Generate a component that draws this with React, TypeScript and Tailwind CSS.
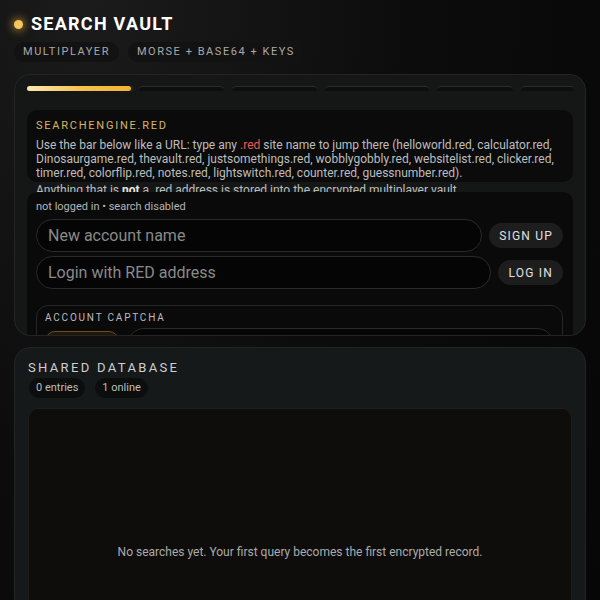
import React from "react";

const tabs = [
  { w: 104, active: true },
  { w: 85 },
  { w: 85 },
  { w: 104 },
  { w: 76 },
  { w: 60 },
];

export default function App() {
  return (
    <div
      className="min-h-screen w-full overflow-hidden bg-[#060606] bg-[radial-gradient(ellipse_at_15%_0%,#1b1b1b_0%,#0c0c0c_45%,#050505_100%)] px-[14px] pt-[14px] pb-[20px]"
      style={{ fontFamily: "Roboto, 'Liberation Sans', sans-serif" }}
    >
      {/* Header */}
      <div className="flex h-[20px] items-center gap-[8px]">
        <span className="block h-[9px] w-[9px] rounded-full bg-[#f7c65e] shadow-[0_0_8px_2px_rgba(245,185,66,0.55)]" />
        <h1 className="text-[18px] font-bold tracking-[0.07em] text-white leading-none">
          SEARCH VAULT
        </h1>
      </div>
      <div className="mt-[8px] flex gap-[9px]">
        <span className="flex h-[20px] items-center rounded-full bg-[#121212] px-[9px] text-[11px] tracking-[0.14em] text-[#a9a9a9]">
          MULTIPLAYER
        </span>
        <span className="flex h-[20px] items-center rounded-full bg-[#121212] px-[9px] text-[11px] tracking-[0.14em] text-[#a9a9a9]">
          MORSE + BASE64 + KEYS
        </span>
      </div>

      {/* Main card */}
      <div className="mt-[12px] h-[262px] overflow-hidden rounded-[16px] border border-[#232525] bg-[#151717] px-[12px] pt-[11px]">
        <div className="flex gap-[8px] overflow-hidden">
          {tabs.map((t, i) => (
            <div
              key={i}
              style={{ width: t.w }}
              className={
                t.active
                  ? "h-[5px] shrink-0 rounded-full bg-gradient-to-r from-[#fbe7b0] via-[#f5c350] to-[#f0b232] shadow-[0_0_6px_rgba(240,180,60,0.35)]"
                  : "h-[5px] shrink-0 rounded-t-[4px] border-t border-[#2a2c2c] bg-[#0d0e0e]"
              }
            />
          ))}
        </div>

        {/* Info box */}
        <div className="mt-[19px] h-[72px] rounded-[10px] bg-[#0b0b0b] px-[9px] pt-[9px]">
          <div className="text-[11px] leading-[14px] tracking-[0.16em] text-[#d8b463]">
            SEARCHENGINE.RED
          </div>
          <p className="mt-[5px] text-[12px] leading-[14px] text-[#bdbdbd]">
            Use the bar below like a URL: type any{" "}
            <span className="text-[#ee5a52]">.red</span> site name to jump there
            (helloworld.red, calculator.red, Dinosaurgame.red, thevault.red,
            justsomethings.red, wobblygobbly.red, websitelist.red, clicker.red,
            timer.red, colorflip.red, notes.red, lightswitch.red, counter.red,
            guessnumber.red).
          </p>
          <p className="mt-[3px] text-[12px] leading-[14px] text-[#bdbdbd]">
            Anything that is <b className="font-bold text-[#e5e5e5]">not</b> a .red
            address is stored into the encrypted multiplayer vault.
          </p>
        </div>

        {/* Login card */}
        <div className="relative mt-[10px] rounded-[10px] bg-[#0a0a0a] pl-[9px] pr-[10px] pt-[8px] pb-[20px]">
          <div className="text-[11px] leading-[14px] text-[#b5b5b5]">
            not logged in • search disabled
          </div>
          <div className="mt-[5px] flex items-center gap-[7px]">
            <div className="flex h-[33px] flex-1 items-center rounded-full border border-[#2b2b2b] bg-[#050505] px-[11px] text-[16px] text-[#8a8a8a]">
              New account name
            </div>
            <button className="h-[25px] rounded-full bg-[#1d1d1d] px-[10px] text-[12px] tracking-[0.1em] text-[#e0e0e0]">
              SIGN UP
            </button>
          </div>
          <div className="mt-[4px] flex items-center gap-[7px]">
            <div className="flex h-[33px] flex-1 items-center rounded-full border border-[#2b2b2b] bg-[#050505] px-[11px] text-[16px] text-[#8a8a8a]">
              Login with RED address
            </div>
            <button className="h-[25px] rounded-full bg-[#1d1d1d] px-[10px] text-[12px] tracking-[0.1em] text-[#e0e0e0]">
              LOG IN
            </button>
          </div>

          <div className="mt-[16px] rounded-[12px] border border-[#262626] px-[8px] pt-[5px] pb-[20px]">
            <div className="text-[10px] leading-[14px] tracking-[0.18em] text-[#bcbcbc]">
              ACCOUNT CAPTCHA
            </div>
            <div className="mt-[3px] flex items-start gap-[8px]">
              <div className="mt-[3px] h-[30px] w-[74px] rounded-[10px] border border-[#6a5020] bg-[#1e170b]" />
              <div className="h-[34px] flex-1 rounded-full border border-[#2b2b2b] bg-[#060606]" />
            </div>
          </div>
        </div>
      </div>

      {/* Shared database */}
      <div className="mt-[11px] rounded-[16px] border border-[#222525] bg-[#161919] px-[13px] pt-[12px] pb-[14px]">
        <div className="text-[13px] leading-[16px] tracking-[0.18em] text-[#cfcfcf]">
          SHARED DATABASE
        </div>
        <div className="mt-[2px] flex gap-[10px] pl-[1px]">
          <span className="flex h-[20px] items-center rounded-full bg-[#0c0d0d] px-[7px] text-[11px] text-[#bdbdbd]">
            0 entries
          </span>
          <span className="flex h-[20px] items-center rounded-full bg-[#0c0d0d] px-[7px] text-[11px] text-[#bdbdbd]">
            1 online
          </span>
        </div>
        <div className="mt-[10px] flex h-[288px] items-center justify-center rounded-[10px] border border-[#1f1e1a] bg-[#0e0d0b] text-[12px] text-[#ababab]">
          No searches yet. Your first query becomes the first encrypted record.
        </div>
      </div>
    </div>
  );
}
